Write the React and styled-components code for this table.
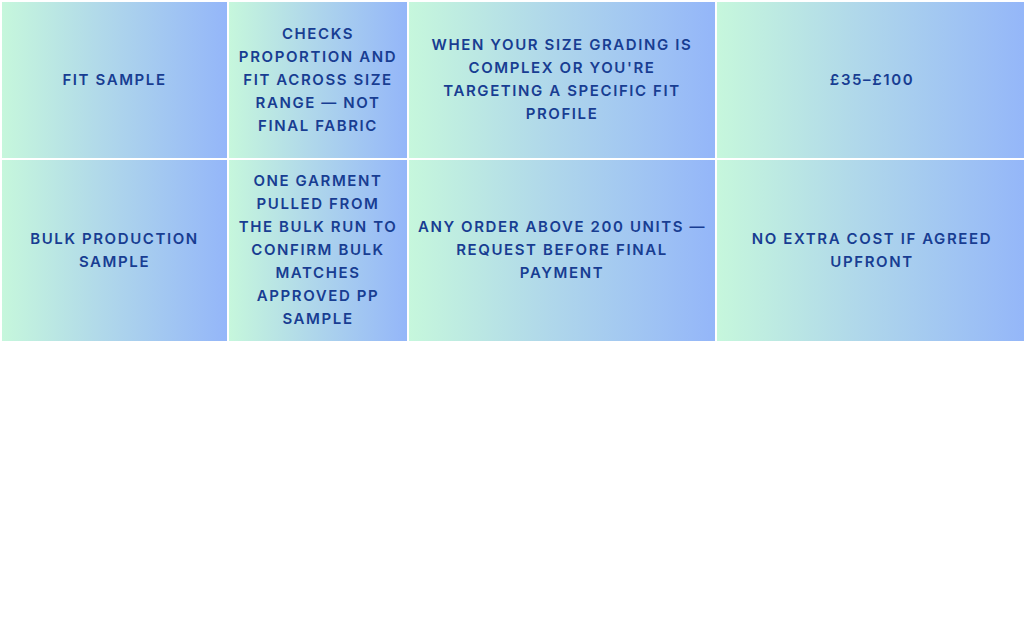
import React from "react";
import styled, { createGlobalStyle } from "styled-components";

const Global = createGlobalStyle`
  html, body { margin: 0; padding: 0; background: #ffffff; }
  body { font-family: "Inter", "Open Sans", sans-serif; overflow: hidden; }
`;

const Table = styled.div`
  display: grid;
  grid-template-columns: 225px 178px 306px 310px;
  grid-auto-rows: minmax(156px, auto);
  gap: 2px;
  padding: 2px 0 0 2px;
  width: 1030px;
`;

const Cell = styled.div`
  background: linear-gradient(90deg, #c6f7dc 0%, #b0d8ea 45%, #94b6f9 100%);
  display: flex;
  align-items: center;
  justify-content: center;
  text-align: center;
  padding: 9px 8px 11px;
  box-sizing: border-box;
  color: #183d92;
  font-family: "Inter", "Open Sans", sans-serif;
  font-weight: 600;
  font-size: 15px;
  line-height: 23px;
  letter-spacing: 1.6px;
  text-transform: uppercase;
`;

const rows = [
  [
    "Fit sample",
    "Checks proportion and fit across size range — not final fabric",
    "When your size grading is complex or you're targeting a specific fit profile",
    "£35–£100",
  ],
  [
    "Bulk production sample",
    "One garment pulled from the bulk run to confirm bulk matches approved PP sample",
    "Any order above 200 units — request before final payment",
    "No extra cost if agreed upfront",
  ],
];

export default function App() {
  return (
    <>
      <Global />
      <Table>
        {rows.map((r, i) =>
          r.map((c, j) => <Cell key={i + "-" + j}>{c}</Cell>)
        )}
      </Table>
    </>
  );
}
